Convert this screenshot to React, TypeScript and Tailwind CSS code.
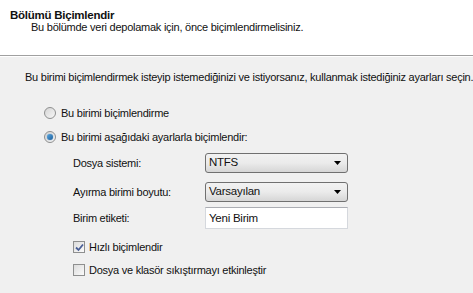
const font = { fontFamily: '"Liberation Sans", Arial, sans-serif' };

function Radio({ checked }: { checked?: boolean }) {
  return (
    <span className="relative flex h-[12px] w-[12px] items-center justify-center rounded-full border border-[#8e8f8f] bg-gradient-to-br from-[#d5d5d5] to-[#f7f7f7]">
      {checked && (
        <span className="h-[6px] w-[6px] rounded-full bg-gradient-to-br from-[#5aa8e0] to-[#1b5f9c] shadow-[0_0_1px_#2c6faa]" />
      )}
    </span>
  );
}

function Check({ checked }: { checked?: boolean }) {
  return (
    <span className="flex h-[12px] w-[12px] items-center justify-center border border-[#8e8f8f] bg-gradient-to-br from-[#dcdcdc] to-[#fbfbfb]">
      {checked && (
        <svg width="9" height="9" viewBox="0 0 9 9">
          <path d="M1 4.5 L3.5 7 L8 1.5" stroke="#4a5f97" strokeWidth="1.8" fill="none" />
        </svg>
      )}
    </span>
  );
}

function Combo({ value }: { value: string }) {
  return (
    <div className="flex h-[20px] w-[143px] items-center justify-between rounded-[3px] border border-[#707070] bg-gradient-to-b from-[#f2f2f2] via-[#ebebeb] to-[#d6d6d6] pl-[3px] pr-[6px] text-[11.5px] text-[#111]">
      <span>{value}</span>
      <svg width="7" height="4" viewBox="0 0 7 4">
        <path d="M0 0 H7 L3.5 4 Z" fill="#000" />
      </svg>
    </div>
  );
}

export default function App() {
  return (
    <div className="h-[293px] w-[473px] overflow-hidden bg-[#f0f0f0] text-[11px] tracking-[-0.25px] text-[#111]" style={font}>
      <div className="h-[56px] border-b border-[#a0a0a0] bg-white pl-[10px] pt-[9px] leading-[12px]">
        <div className="text-[11.5px] font-bold">Bölümü Biçimlendir</div>
        <div className="pl-[21px]">Bu bölümde veri depolamak için, önce biçimlendirmelisiniz.</div>
      </div>
      <div className="border-t border-white pl-[25px] pt-[13px]">
        <div className="h-[14px] leading-[14px] whitespace-nowrap">
          Bu birimi biçimlendirmek isteyip istemediğinizi ve istiyorsanız, kullanmak istediğiniz ayarları seçin.
        </div>
        <div className="mt-[19px] flex h-[20px] items-center gap-[5px] pl-[19px]">
          <Radio />
          <span>Bu birimi biçimlendirme</span>
        </div>
        <div className="mt-[4px] flex h-[20px] items-center gap-[5px] pl-[19px]">
          <Radio checked />
          <span>Bu birimi aşağıdaki ayarlarla biçimlendir:</span>
        </div>
        <div className="pl-[48px]">
          <div className="mt-[6px] flex h-[20px] items-center">
            <span className="w-[132px]">Dosya sistemi:</span>
            <Combo value="NTFS" />
          </div>
          <div className="mt-[9px] flex h-[20px] items-center">
            <span className="w-[132px]">Ayırma birimi boyutu:</span>
            <Combo value="Varsayılan" />
          </div>
          <div className="mt-[5px] flex h-[22px] items-center">
            <span className="w-[132px]">Birim etiketi:</span>
            <div className="flex h-[22px] w-[143px] items-start border border-[#d5d8dd] border-t-[#abadb3] bg-white pl-[3px] pt-[2px] text-[11.5px]">
              Yeni Birim
            </div>
          </div>
          <div className="mt-[11px] flex h-[14px] items-center gap-[4px]">
            <Check checked />
            <span>Hızlı biçimlendir</span>
          </div>
          <div className="mt-[9px] flex h-[14px] items-center gap-[4px]">
            <Check />
            <span>Dosya ve klasör sıkıştırmayı etkinleştir</span>
          </div>
        </div>
      </div>
    </div>
  );
}
